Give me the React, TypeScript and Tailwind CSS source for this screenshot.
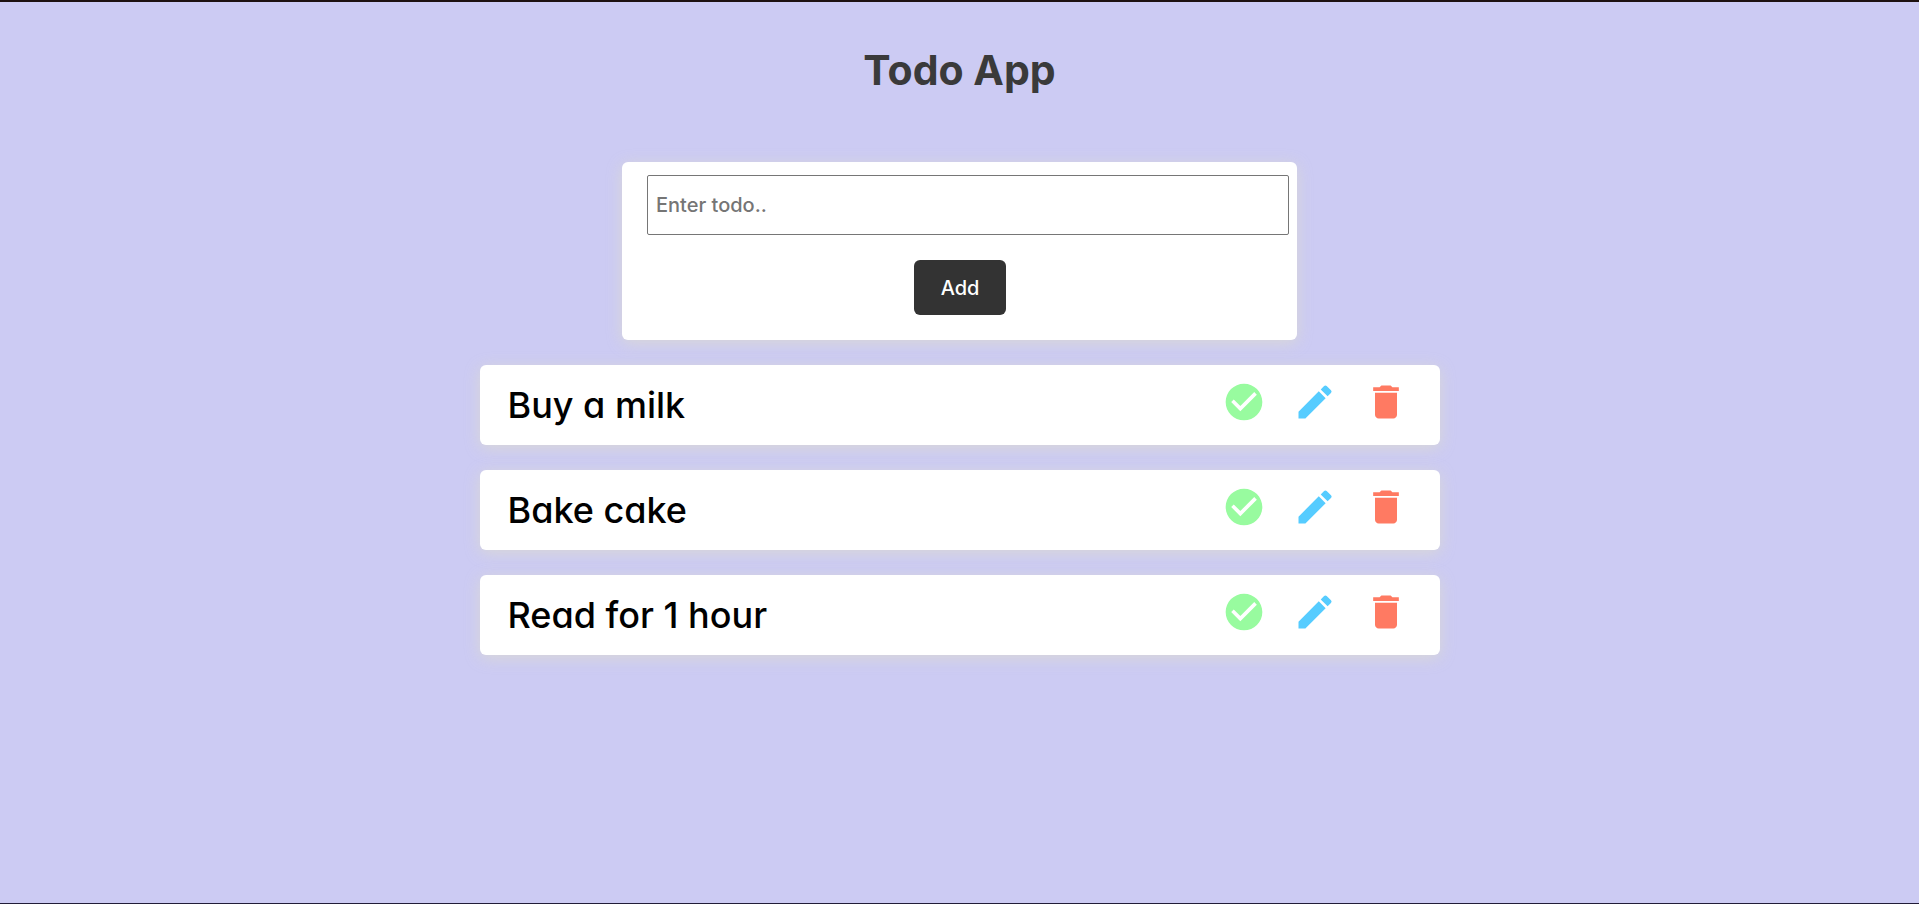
import { useState } from "react";
import type { FormEvent } from "react";
import { MdCheckCircle, MdDelete, MdEdit } from "react-icons/md";

interface Todo {
  id: number;
  text: string;
  done: boolean;
}

const initialTodos: Todo[] = [
  { id: 1, text: "Buy a milk", done: false },
  { id: 2, text: "Bake cake", done: false },
  { id: 3, text: "Read for 1 hour", done: false },
];

const panel = "rounded-md bg-white shadow-[0_3px_15px_rgba(222,220,205,0.75)]";

export default function App() {
  const [todos, setTodos] = useState<Todo[]>(initialTodos);
  const [draft, setDraft] = useState("");
  const [editing, setEditing] = useState<number | null>(null);

  const submit = (event: FormEvent) => {
    event.preventDefault();
    const text = draft.trim();
    if (!text) return;
    setTodos(
      editing === null
        ? [...todos, { id: Date.now(), text, done: false }]
        : todos.map((todo) => (todo.id === editing ? { ...todo, text } : todo)),
    );
    setDraft("");
    setEditing(null);
  };

  return (
    <div className="flex min-h-screen flex-col items-center border-t-2 border-b border-t-[#1c1110] border-b-[#211c38] bg-[#cccbf3] px-4 font-['Inter','Open_Sans',sans-serif] [font-feature-settings:'cv11']">
      <h1 className="pt-[38px] text-[41px] leading-15 font-bold text-[#3a3a3a]">Todo App</h1>

      <form
        onSubmit={submit}
        className={`mt-[62px] flex w-full max-w-[675px] flex-col items-center pt-[13px] pr-2 pb-[25px] pl-[25px] ${panel}`}
      >
        <input
          aria-label="Todo"
          value={draft}
          onChange={(event) => setDraft(event.target.value)}
          placeholder="Enter todo.."
          className="h-15 w-full rounded-xs border border-[#767676] bg-white px-2 text-xl font-medium text-black placeholder:text-[#757575]"
        />
        <button
          type="submit"
          className="mt-[25px] mr-4 h-[55px] cursor-pointer rounded-md bg-[#333333] px-[27px] text-xl font-medium text-white"
        >
          Add
        </button>
      </form>

      <ul className="mt-[25px] flex w-full max-w-[960px] flex-col gap-[25px]">
        {todos.map((todo) => (
          <li
            key={todo.id}
            className={`flex min-h-20 items-center justify-between pr-8 pl-7 ${panel}`}
          >
            <span
              className={`text-[36px] leading-12 font-medium text-black ${todo.done ? "line-through" : ""}`}
            >
              {todo.text}
            </span>
            <div className="flex gap-[27px] pb-1.5 text-[44px]">
              <button
                type="button"
                aria-label={`Complete ${todo.text}`}
                className="cursor-pointer text-[#98fb9f]"
                onClick={() =>
                  setTodos(todos.map((t) => (t.id === todo.id ? { ...t, done: !t.done } : t)))
                }
              >
                <MdCheckCircle />
              </button>
              <button
                type="button"
                aria-label={`Edit ${todo.text}`}
                className="cursor-pointer text-[#56ccff]"
                onClick={() => {
                  setDraft(todo.text);
                  setEditing(todo.id);
                }}
              >
                <MdEdit />
              </button>
              <button
                type="button"
                aria-label={`Delete ${todo.text}`}
                className="cursor-pointer text-[#ff7a62]"
                onClick={() => setTodos(todos.filter((t) => t.id !== todo.id))}
              >
                <MdDelete />
              </button>
            </div>
          </li>
        ))}
      </ul>
    </div>
  );
}
